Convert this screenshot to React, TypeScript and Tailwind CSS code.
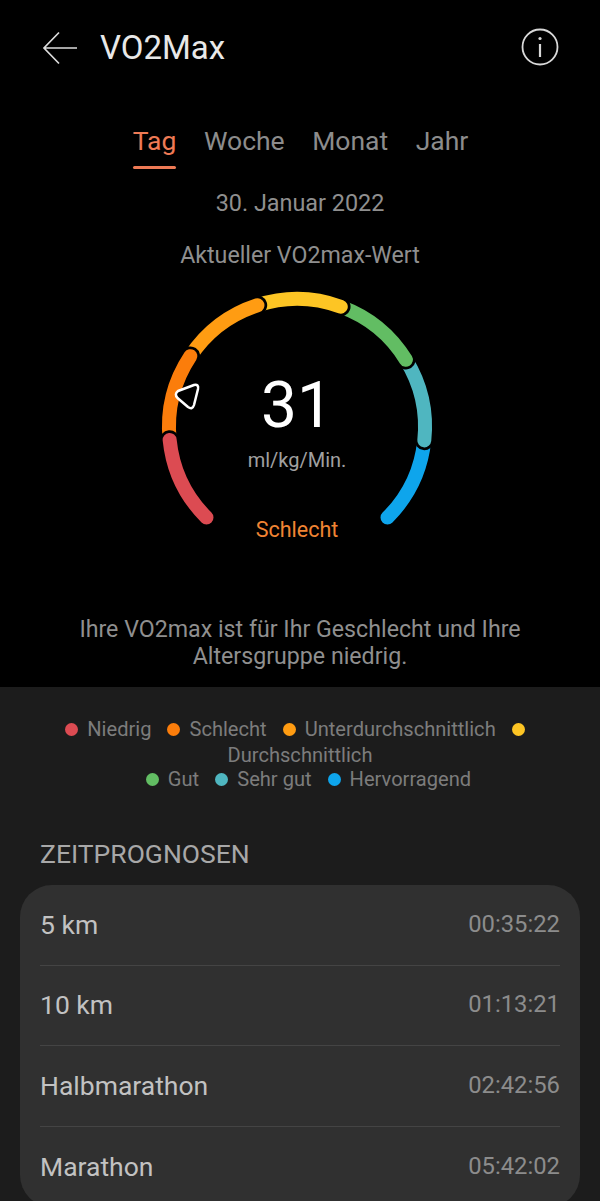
const font = { fontFamily: 'Roboto, sans-serif' };

const ROW = [
  ['5 km', '00:35:22'],
  ['10 km', '01:13:21'],
  ['Halbmarathon', '02:42:56'],
  ['Marathon', '05:42:02'],
];

const CX = 297;
const CY = 427;
const R = 128;

function pt(a: number) {
  const t = (a * Math.PI) / 180;
  return `${(CX + R * Math.sin(t)).toFixed(2)} ${(CY - R * Math.cos(t)).toFixed(2)}`;
}

function arc(a: number, b: number) {
  return `M${pt(a)} A${R} ${R} 0 0 1 ${pt(b)}`;
}

const SEG: [string, number, number][] = [
  ['#0ea5ec', 96, 135],
  ['#4fb6c0', 58.3, 96],
  ['#62bd63', 20, 58.3],
  ['#fdc524', -18, 20],
  ['#ff9c12', -56.4, -18],
  ['#fb7d0b', -95.8, -56.4],
  ['#dc4b52', -135, -95.8],
];

function Gauge() {
  return (
    <svg className="absolute left-0 top-0" width="600" height="560" viewBox="0 0 600 560" fill="none">
      {SEG.map(([c, a, b]) => (
        <g key={c} strokeLinecap="round">
          <path d={arc(a, b)} stroke="#000" strokeWidth="19.5" />
          <path d={arc(a, b)} stroke={c} strokeWidth="14" />
        </g>
      ))}
      <path
        d="M178 391 L194 385 Q199 384 198 389 L194 405 Q192.5 410 188 407 L177.5 398 Q174 394 178 391 Z"
        fill="#000"
        stroke="#fff"
        strokeWidth="2.5"
        strokeLinejoin="round"
      />
    </svg>
  );
}

function Dot({ c }: { c: string }) {
  return <span className="inline-block w-[13px] h-[13px] rounded-full" style={{ backgroundColor: c }} />;
}

function Legend({ c, t }: { c: string; t: string }) {
  return (
    <span className="flex items-center gap-[9px]">
      <Dot c={c} />
      <span>{t}</span>
    </span>
  );
}

export default function App() {
  return (
    <div className="w-[600px] h-[1201px] overflow-hidden bg-black" style={font}>
      <div className="relative h-[687px]">
        <Gauge />
        <div className="relative">
          <header className="flex items-center h-[95px] pl-[42px] pr-[41px]">
            <svg width="36" height="34" viewBox="0 0 36 34" fill="none" stroke="#dcdcdc" strokeWidth="1.7">
              <path d="M35 17 H2 M17 1.5 L2 17 L17 32.5" />
            </svg>
            <span className="ml-[22px] text-[33px] text-[#e8e8e8] leading-none">VO2Max</span>
            <svg className="ml-auto -mt-[2px]" width="38" height="38" viewBox="0 0 38 38" fill="none" stroke="#d8d8d8" strokeWidth="1.8">
              <circle cx="19" cy="19" r="17.5" />
              <path d="M19 16 V29" strokeWidth="2.2" />
              <circle cx="19" cy="10.5" r="1.6" fill="#d8d8d8" stroke="none" />
            </svg>
          </header>

          <nav className="flex justify-center gap-[27.5px] text-[26.5px] leading-none text-[#8c8c8c] pt-[33px] ml-[1px]">
            <span className="relative text-[#ee7a55]">
              Tag
              <span className="absolute left-0 right-0 top-[38px] h-[3px] rounded-full bg-[#ee7a55]" />
            </span>
            <span>Woche</span>
            <span>Monat</span>
            <span>Jahr</span>
          </nav>

          <p className="mt-[33px] text-center text-[23.4px] leading-[30px] text-[#8f8f8f]">30. Januar 2022</p>
          <p className="mt-[22px] text-center text-[23.2px] leading-[30px] text-[#8f8f8f]">Aktueller VO2max-Wert</p>

          <div className="mt-[101px] ml-[-6px] text-center text-[64px] leading-[70px] text-white">31</div>
          <div className="mt-[5px] ml-[-6px] text-center text-[20px] leading-[28px] text-[#a0a0a0]">ml/kg/Min.</div>
          <div className="mt-[42px] ml-[-6px] text-center text-[21.5px] leading-[28px] text-[#f08433]">Schlecht</div>

          <p className="mt-[72px] px-[60px] text-center text-[23.2px] leading-[27px] text-[#8f8f8f]">
            Ihre VO2max ist für Ihr Geschlecht und Ihre Altersgruppe niedrig.
          </p>
        </div>
      </div>

      <section className="h-[514px] bg-[#1c1c1c]">
        <div className="pt-[29px] flex flex-col items-center text-[20.1px] leading-[26px] text-[#7c7c7c]">
          <div className="flex gap-[16px] -ml-[10px]">
            <Legend c="#dc4b52" t="Niedrig" />
            <Legend c="#fb7d0b" t="Schlecht" />
            <Legend c="#ff9c12" t="Unterdurchschnittlich" />
            <span className="flex items-center">
              <Dot c="#fdc524" />
            </span>
          </div>
          <div>Durchschnittlich</div>
          <div className="flex gap-[16px] -mt-[2px] ml-[17px]">
            <Legend c="#62bd63" t="Gut" />
            <Legend c="#4fb6c0" t="Sehr gut" />
            <Legend c="#0ea5ec" t="Hervorragend" />
          </div>
        </div>

        <h2 className="mt-[47px] ml-[40px] text-[26.5px] leading-[30px] text-[#a8a8a8]">ZEITPROGNOSEN</h2>

        <div className="mx-[20px] mt-[16px] h-[322px] rounded-[32px] bg-[#303030] px-[20px]">
          {ROW.map(([a, b], i) => (
            <div key={a} className={`flex items-center justify-between h-[80.5px] ${i < 3 ? 'border-b border-[#444444]' : ''}`}>
              <span className="text-[26.5px] text-[#c2c2c2]">{a}</span>
              <span className="text-[23.8px] text-[#8c8c8c]">{b}</span>
            </div>
          ))}
        </div>
      </section>
    </div>
  );
}
